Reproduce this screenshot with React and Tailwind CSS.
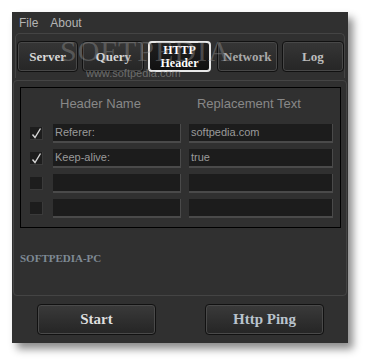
import React from "react";

const serif = { fontFamily: '"Liberation Serif", "Times New Roman", serif' };
const sans = { fontFamily: '"Liberation Sans", Arial, sans-serif' };

const TabButton = ({ label, active, tone = "text-[#d8d8d8]", wide = "w-[62px]" }) => (
  <div
    className={`${wide} h-[31px] rounded-[4px] flex items-center justify-center text-center font-bold leading-[13px] ${
      active
        ? "border-2 border-[#e8e8e8] bg-gradient-to-b from-[#202020] to-[#111] text-white text-[12px]"
        : `border border-[#111] bg-gradient-to-b from-[#363636] to-[#262626] shadow-[inset_0_0_0_1px_#484848] text-[13px] ${tone}`
    }`}
    style={serif}
  >
    {label}
  </div>
);

const Check = ({ on }) => (
  <div className="w-[13px] h-[13px] bg-[#1d1d1d] border-r border-b border-[#3a3a3a] relative">
    {on && (
      <svg className="absolute left-0 top-0" width="13" height="13" viewBox="0 0 13 13">
        <path d="M2.5 7.5 L5 10.5 L10.5 1.5" fill="none" stroke="#d6d6d6" strokeWidth="1.4" />
      </svg>
    )}
  </div>
);

const Field = ({ w, value }) => (
  <div
    className={`${w} h-[19px] bg-[#1c1c1c] border-b-2 border-r border-[#4a4a4a] flex items-center px-[2px] text-[11px] text-[#9a9a9a]`}
    style={sans}
  >
    {value}
  </div>
);

const rows = [
  { on: true, name: "Referer:", value: "softpedia.com" },
  { on: true, name: "Keep-alive:", value: "true" },
  { on: false, name: "", value: "" },
  { on: false, name: "", value: "" },
];

const BigButton = ({ label, tone }) => (
  <div
    className={`w-[119px] h-[31px] rounded-[4px] border border-[#111] bg-gradient-to-b from-[#3a3a3a] to-[#252525] shadow-[inset_0_0_0_1px_#4a4a4a] flex items-center justify-center text-[15px] font-bold ${tone}`}
    style={serif}
  >
    {label}
  </div>
);

export default function App() {
  return (
    <div className="w-[368px] h-[364px] bg-white pt-[12px] pl-[12px] relative overflow-hidden">
      <div className="w-[336px] h-[331px] bg-[#303030] flex flex-col shadow-[5px_6px_8px_rgba(0,0,0,0.45)]">
        {/* menu */}
        <div className="h-[21px] flex items-center gap-[12px] pl-[7px] text-[12px] text-[#b4b4b4]" style={sans}>
          <span>File</span>
          <span>About</span>
        </div>

        {/* tabs */}
        <div className="mx-[3px] h-[45px] border border-[#444] border-b-0 rounded-t-[5px] pt-[7px] pl-[1px] flex gap-[4px]">
          <TabButton label="Server" />
          <TabButton label="Query" wide="w-[63px]" />
          <TabButton label={<>HTTP<br />Header</>} active wide="w-[63px]" />
          <TabButton label="Network" tone="text-[#a8a8a8]" wide="w-[62px] ml-[2px]" />
          <TabButton label="Log" tone="text-[#bdbdbd]" wide="w-[63px]" />
        </div>

        {/* header table group */}
        <div className="mx-[1px] mt-[2px] h-[216px] border border-[#444] rounded-[4px] pt-[6px] px-[6px]">
          <div className="w-[321px] h-[141px] border border-black flex flex-col">
            <div className="h-[31px] flex items-center text-[13px] text-[#888]" style={sans}>
              <span className="ml-[39px]">Header Name</span>
              <span className="ml-[56px]">Replacement Text</span>
            </div>
            <div className="flex flex-col gap-[6px] mt-[5px]">
              {rows.map((r, i) => (
                <div key={i} className="flex items-center">
                  <div className="ml-[9px]">
                    <Check on={r.on} />
                  </div>
                  <div className="ml-[10px]">
                    <Field w="w-[128px]" value={r.name} />
                  </div>
                  <div className="ml-[8px]">
                    <Field w="w-[144px]" value={r.value} />
                  </div>
                </div>
              ))}
            </div>
          </div>
          <div className="mt-[22px] text-[11px] font-bold text-[#7f8a95]" style={serif}>
            SOFTPEDIA-PC
          </div>
        </div>

        {/* bottom buttons */}
        <div className="flex pt-[8px] pl-[25px] gap-[49px]">
          <BigButton label="Start" tone="text-[#dedede]" />
          <BigButton label="Http Ping" tone="text-[#b9c3cd]" />
        </div>
      </div>

      {/* watermark */}
      <div className="absolute left-[60px] top-[34px] pointer-events-none flex flex-col items-center">
        <span className="text-[30px] leading-[34px] tracking-[1px] text-[#9a9a9a]/40" style={serif}>
          SOFTPEDIA
        </span>
        <span className="-mt-[1px] text-[11px] leading-[12px] text-[#999]/60 ml-[-24px]" style={sans}>
          www.softpedia.com
        </span>
      </div>
    </div>
  );
}
